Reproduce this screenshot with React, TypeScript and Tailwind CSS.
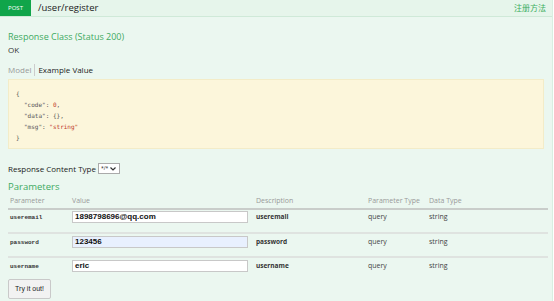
const PARAMS = [
  { name: "useremail", value: "1898798696@qq.com", desc: "useremail", filled: false },
  { name: "password", value: "123456", desc: "password", filled: true },
  { name: "username", value: "eric", desc: "username", filled: false },
];

const sans = { fontFamily: '"Open Sans", "Noto Sans CJK SC", sans-serif' };

export default function App() {
  return (
    <div className="w-[554px] h-[301px] bg-white overflow-hidden" style={sans}>
      <div className="w-[553px] h-[301px] border-r border-[#d9efe1] bg-[#ebf7f0]">
        {/* heading bar */}
        <div className="h-[17px] flex items-stretch bg-[#e6f5eb] border-b border-[#cfe9d8]">
          <span className="w-[31px] bg-[#10a54a] text-white text-[6px] flex items-center justify-center">
            POST
          </span>
          <span className="ml-[7px] text-[9.5px] text-[#222] flex items-center">/user/register</span>
          <span className="ml-auto mr-[6px] text-[8px] text-[#3cae5e] flex items-center">注册方法</span>
        </div>

        <div className="px-[8px]">
          <div className="mt-[13px] text-[9px] leading-[14px] text-[#3eaa62]">Response Class (Status 200)</div>
          <div className="text-[8px] leading-[11px] text-[#333]">OK</div>
          <div className="mt-[9px] flex items-center text-[8px] leading-[12px]">
            <span className="text-[#999] pr-[3px] border-r border-[#ccc]">Model</span>
            <span className="pl-[3px] text-[#222]">Example Value</span>
          </div>

          <div className="mt-[3px] h-[70px] bg-[#fcf6db] border border-[#f3ecc8] px-[7px] pt-[8px] text-[6px] leading-[11px] text-[#555]" style={{ fontFamily: '"DejaVu Sans Mono", monospace' }}>
            <div>{"{"}</div>
            <div className="pl-[8px]">"code": <span className="text-[#c0392b]">0</span>,</div>
            <div className="pl-[8px]">"data": {"{}"},</div>
            <div className="pl-[8px]">"msg": <span className="text-[#c0392b]">"string"</span></div>
            <div>{"}"}</div>
          </div>

          <div className="mt-[14px] h-[11px] flex items-center text-[8px] text-[#222]">
            <span>Response Content Type</span>
            <span className="ml-[2px] h-[11px] w-[22px] border border-[#aaa] bg-white flex items-center gap-[2px] pl-[2px] text-[5px] leading-none">
              <span>*/*</span>
              <svg width="6" height="4" viewBox="0 0 6 4"><path d="M0.5 0.5 L3 3 L5.5 0.5" stroke="#333" strokeWidth="1.2" fill="none" /></svg>
            </span>
          </div>

          <div className="mt-[6px] text-[9.5px] leading-[14px] text-[#3eaa62]">Parameters</div>

          <div className="w-[540px] mt-[2px]">
            <div className="grid grid-cols-[64px_184px_112px_61px_119px] text-[7px] text-[#999] pb-[2px] border-b-2 border-[#c9cdca] leading-[10px]">
              <span className="pl-[2px]">Parameter</span>
              <span>Value</span>
              <span>Description</span>
              <span>Parameter Type</span>
              <span>Data Type</span>
            </div>
            {PARAMS.map((p, i) => (
              <div
                key={p.name}
                className={`grid grid-cols-[64px_184px_112px_61px_119px] items-start ${i === 0 ? "pt-[1px]" : "pt-[2px]"} ${i < 2 ? "h-[24px] border-b-2 border-[#dfe3e0]" : "h-[15px]"}`}
              >
                <span className="h-[12px] flex items-center pl-[2px] text-[6px] font-bold text-[#333]" style={{ fontFamily: '"Liberation Mono", monospace' }}>
                  {p.name}
                </span>
                <span
                  className={`h-[12px] w-[176px] border border-[#c8c8c8] px-[2px] text-[8px] font-bold leading-[10px] text-[#111] ${p.filled ? "bg-[#e8f0fe]" : "bg-white"}`}
                  style={{ fontFamily: '"Liberation Sans", Arial, sans-serif' }}
                >
                  {p.value}
                </span>
                <span className="h-[12px] flex items-center text-[6.5px] font-bold text-[#333]">{p.desc}</span>
                <span className="h-[12px] flex items-center text-[7px] text-[#444]">query</span>
                <span className="h-[12px] flex items-center text-[7px] text-[#444]">string</span>
              </div>
            ))}
          </div>

          <button className="mt-[4px] h-[20px] w-[43px] border border-[#c9c9c9] bg-[#f2f2f2] text-[7px] text-[#222] rounded-[2px]" style={{ fontFamily: '"Liberation Sans", Arial, sans-serif' }}>
            Try it out!
          </button>
        </div>
      </div>
    </div>
  );
}
